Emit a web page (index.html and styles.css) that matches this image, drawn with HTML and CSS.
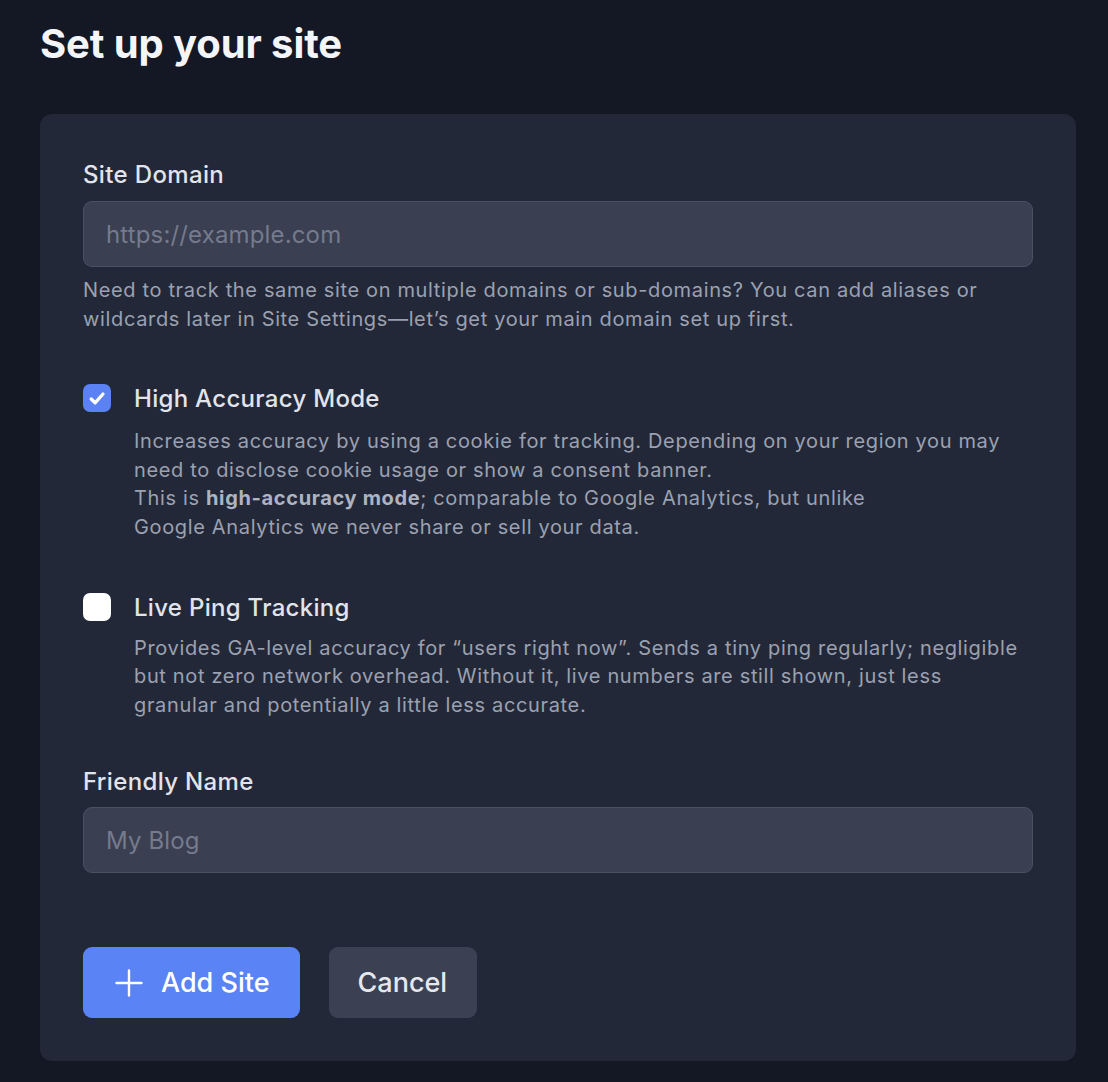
FILE: index.html
```
<!DOCTYPE html>
<html lang="en">
<head>
<meta charset="utf-8">
<title>Set up your site</title>
<link rel="stylesheet" href="styles.css">
</head>
<body>
<main class="page">
  <h1 class="title">Set up your site</h1>
  <form class="card">
    <div class="field">
      <label class="label" for="domain">Site Domain</label>
      <input class="input" id="domain" type="text" placeholder="https://example.com">
      <p class="help">Need to track the same site on multiple domains or sub-domains? You can add aliases or wildcards later in Site Settings—let’s get your main domain set up first.</p>
    </div>

    <div class="option option-first">
      <span class="check checked">
        <svg viewBox="0 0 28 28" width="28" height="28"><path d="M8.2 15l3.9 3.8 7.9-8.8" fill="none" stroke="#fff" stroke-width="3.3" stroke-linecap="round" stroke-linejoin="round"/></svg>
      </span>
      <div class="option-body">
        <div class="option-title">High Accuracy Mode</div>
        <p class="desc">Increases accuracy by using a cookie for tracking. Depending on your region you may need to disclose cookie usage or show a consent banner.<br>This is <strong>high-accuracy mode</strong>; comparable to Google Analytics, but unlike<br>Google Analytics we never share or sell your data.</p>
      </div>
    </div>

    <div class="option option-second">
      <span class="check"></span>
      <div class="option-body">
        <div class="option-title">Live Ping Tracking</div>
        <p class="desc desc-tight">Provides GA-level accuracy for “users right now”. Sends a tiny ping regularly; negligible but not zero network overhead. Without it, live numbers are still shown, just less granular and potentially a little less accurate.</p>
      </div>
    </div>

    <div class="field field-name">
      <label class="label" for="name">Friendly Name</label>
      <input class="input input-name" id="name" type="text" placeholder="My Blog">
    </div>

    <div class="actions">
      <button type="button" class="btn btn-primary">
        <svg class="plus" viewBox="0 0 28 28" width="28" height="28"><path d="M14 1.5v25M1.5 14h25" fill="none" stroke="#fff" stroke-width="2.4" stroke-linecap="round"/></svg>
        <span>Add Site</span>
      </button>
      <button type="button" class="btn btn-secondary">Cancel</button>
    </div>
  </form>
</main>
</body>
</html>
```
FILE: styles.css
```
* { box-sizing: border-box; }
html, body {
  margin: 0;
  padding: 0;
  background: #131824;
}
body {
  font-family: Inter, "Noto Sans", "Liberation Sans", sans-serif;
  color: #e3e5ec;
}
.page {
  padding: 18px 32px 22px 40px;
}
.title {
  margin: 0;
  font-size: 40px;
  line-height: 52px;
  font-weight: 700;
  color: #f4f5f9;
  letter-spacing: -0.1px;
}
.card {
  margin-top: 44px;
  background: #232838;
  border-radius: 12px;
  padding: 45px 43px 43px 43px;
  display: flex;
  flex-direction: column;
}
.field {
  display: flex;
  flex-direction: column;
}
.label {
  font-size: 24px;
  line-height: 32px;
  font-weight: 500;
  color: #e2e4ec;
  letter-spacing: 0.35px;
}
.input {
  margin-top: 10px;
  height: 66px;
  width: 100%;
  background: #3a3f51;
  border: 1px solid #4b5063;
  border-radius: 9px;
  padding: 0 22px;
  font-family: inherit;
  font-size: 24px;
  letter-spacing: 0.15px;
  color: #e3e5ec;
  outline: none;
}
.input-name {
  margin-top: 9px;
}
.input::placeholder {
  color: #757b8c;
}
.help {
  margin: 9px 0 0;
  font-size: 20px;
  line-height: 28.6px;
  letter-spacing: 0.65px;
  color: #9ba1b1;
}
.option {
  display: flex;
  align-items: flex-start;
  gap: 23px;
}
.option-first {
  margin-top: 50px;
}
.option-second {
  margin-top: 50px;
}
.check {
  flex: none;
  width: 28px;
  height: 28px;
  margin-top: 1px;
  border-radius: 7px;
  background: #ffffff;
  display: flex;
  align-items: center;
  justify-content: center;
}
.check.checked {
  background: #5a82f4;
}
.option-body {
  display: flex;
  flex-direction: column;
  padding-right: 12px;
}
.option-title {
  font-size: 24px;
  line-height: 32px;
  font-weight: 500;
  color: #e2e4ec;
  letter-spacing: 0.3px;
}
.desc {
  margin: 12px 0 0;
  font-size: 20px;
  line-height: 28.6px;
  letter-spacing: 0.65px;
  color: #9ba1b1;
}
.desc-tight {
  margin-top: 10px;
}
.desc strong {
  font-weight: 700;
  color: #aeb3c1;
}
.field-name {
  margin-top: 47px;
}
.actions {
  display: flex;
  gap: 29px;
  margin-top: 74px;
}
.btn {
  height: 71px;
  border: none;
  border-radius: 9px;
  font-family: inherit;
  font-size: 27px;
  font-weight: 500;
  display: flex;
  align-items: center;
  cursor: pointer;
}
.btn-primary {
  background: #5a83f5;
  color: #ffffff;
  padding: 0 30px 0 32px;
  gap: 18px;
}
.btn-secondary {
  background: #3b4052;
  color: #e6e8ef;
  padding: 0 30px 0 29px;
}
.plus {
  display: block;
}
```
